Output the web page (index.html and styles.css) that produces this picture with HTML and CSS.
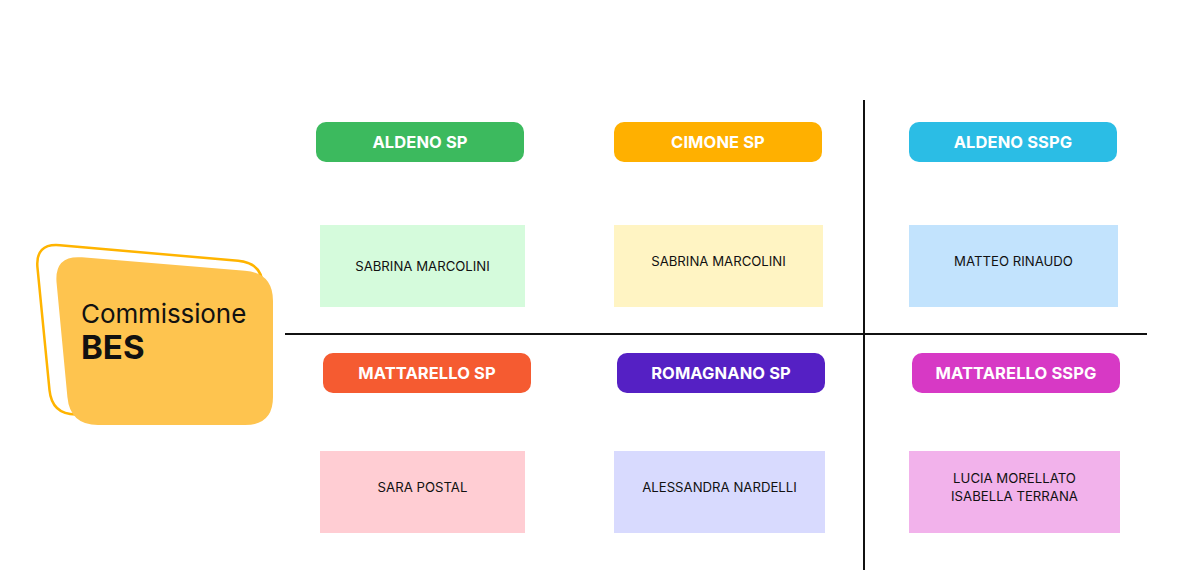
FILE: index.html
```html
<!DOCTYPE html>
<html lang="it">
<head>
<meta charset="utf-8">
<title>Commissione BES</title>
<link rel="stylesheet" href="styles.css">
</head>
<body>
<div class="page">
  <div class="logo">
    <svg class="logo-art" width="260" height="200" viewBox="0 0 260 200" aria-hidden="true">
      <path d="M29.9,10.2 L208.1,25.8 Q233,28 233,53 L233,150 Q233,175 208,175 L47,179.4 Q22,180 19.5,155.1 L7.5,32.9 Q5,8 29.9,10.2 Z" fill="none" stroke="#ffb400" stroke-width="2.5"/>
      <path d="M52,22.3 L215,35.7 Q243,38 243,66 L243,162 Q243,190 215,190 L68,190 Q40,190 37.4,162 L26.6,48 Q24,20 52,22.3 Z" fill="#fec44f"/>
    </svg>
    <div class="logo-text">
      <span class="logo-line1">Commissione</span>
      <span class="logo-line2">BES</span>
    </div>
  </div>

  <div class="board">
    <div class="cell c1">
      <div class="tag tag-green">ALDENO SP</div>
      <div class="card card-green card-centered">SABRINA MARCOLINI</div>
    </div>
    <div class="cell c2">
      <div class="tag tag-orange">CIMONE SP</div>
      <div class="card card-yellow">SABRINA MARCOLINI</div>
    </div>
    <div class="cell c3 right">
      <div class="tag tag-cyan">ALDENO SSPG</div>
      <div class="card card-blue">MATTEO RINAUDO</div>
    </div>
    <div class="cell c4 bottom">
      <div class="tag tag-red">MATTARELLO SP</div>
      <div class="card card-pink">SARA POSTAL</div>
    </div>
    <div class="cell c5 bottom">
      <div class="tag tag-purple">ROMAGNANO SP</div>
      <div class="card card-lavender">ALESSANDRA NARDELLI</div>
    </div>
    <div class="cell c6 bottom right">
      <div class="tag tag-magenta">MATTARELLO SSPG</div>
      <div class="card card-magenta">LUCIA MORELLATO<br>ISABELLA TERRANA</div>
    </div>
  </div>
</div>
</body>
</html>
```

FILE: styles.css
```css
* { box-sizing: border-box; }

html, body {
  margin: 0;
  padding: 0;
  background: #ffffff;
}

body {
  width: 1181px;
  height: 587px;
  overflow: hidden;
  font-family: "Inter", "Noto Sans", sans-serif;
  color: #111;
}

.page {
  display: flex;
  align-items: flex-start;
}

/* Logo */
.logo {
  position: relative;
  margin-left: 30px;
  margin-top: 235px;
  width: 255px;
  height: 200px;
  flex: none;
}

.logo-art {
  display: block;
  overflow: visible;
}

.logo-text {
  position: absolute;
  left: 51px;
  top: 63px;
  display: flex;
  flex-direction: column;
  color: #111;
}

.logo-line1 {
  font-size: 26px;
  font-weight: 400;
  line-height: 31px;
  letter-spacing: -0.1px;
}

.logo-line2 {
  font-size: 33px;
  font-weight: 700;
  line-height: 36px;
}

/* Board */
.board {
  margin-top: 100px;
  width: 862px;
  height: 470px;
  display: grid;
  grid-template-columns: 285px 293px 284px;
  grid-template-rows: 233px 237px;
  flex: none;
}

.cell {
  display: flex;
  flex-direction: column;
  align-items: flex-start;
  padding-top: 22px;
}

.cell.right {
  border-left: 2px solid #111;
}

.cell.bottom {
  border-top: 2px solid #111;
  padding-top: 18px;
}

.tag {
  width: 208px;
  height: 40px;
  border-radius: 10px;
  color: #ffffff;
  font-size: 16.5px;
  font-weight: 700;
  display: flex;
  align-items: center;
  justify-content: center;
  letter-spacing: 0.1px;
}

.card {
  width: 209px;
  height: 82px;
  margin-top: 63px;
  display: flex;
  align-items: center;
  justify-content: center;
  text-align: center;
  font-size: 13.2px;
  line-height: 18px;
  color: #111;
  padding-bottom: 10px;
}

.card-centered { padding-bottom: 0; }

.bottom .card { margin-top: 58px; }

.c1 .tag { margin-left: 31px; }
.c1 .card { margin-left: 35px; width: 205px; }
.c2 .tag { margin-left: 44px; }
.c2 .card { margin-left: 44px; }
.c3 .tag { margin-left: 44px; }
.c3 .card { margin-left: 44px; }
.c4 .tag { margin-left: 38px; }
.c4 .card { margin-left: 35px; width: 205px; }
.c5 .tag { margin-left: 47px; }
.c5 .card { margin-left: 44px; width: 211px; }
.c6 .tag { margin-left: 47px; }
.c6 .card { margin-left: 44px; width: 211px; }

.tag-green { background: #3cba5e; }
.tag-orange { background: #ffb000; }
.tag-cyan { background: #2bbde5; }
.tag-red { background: #f55b31; }
.tag-purple { background: #5520c4; }
.tag-magenta { background: #d739c5; }

.card-green { background: #d5fbdc; }
.card-yellow { background: #fff4c3; }
.card-blue { background: #c2e3fd; }
.card-pink { background: #ffcdd3; }
.card-lavender { background: #d8dafe; }
.card-magenta { background: #f2b2eb; }
```
